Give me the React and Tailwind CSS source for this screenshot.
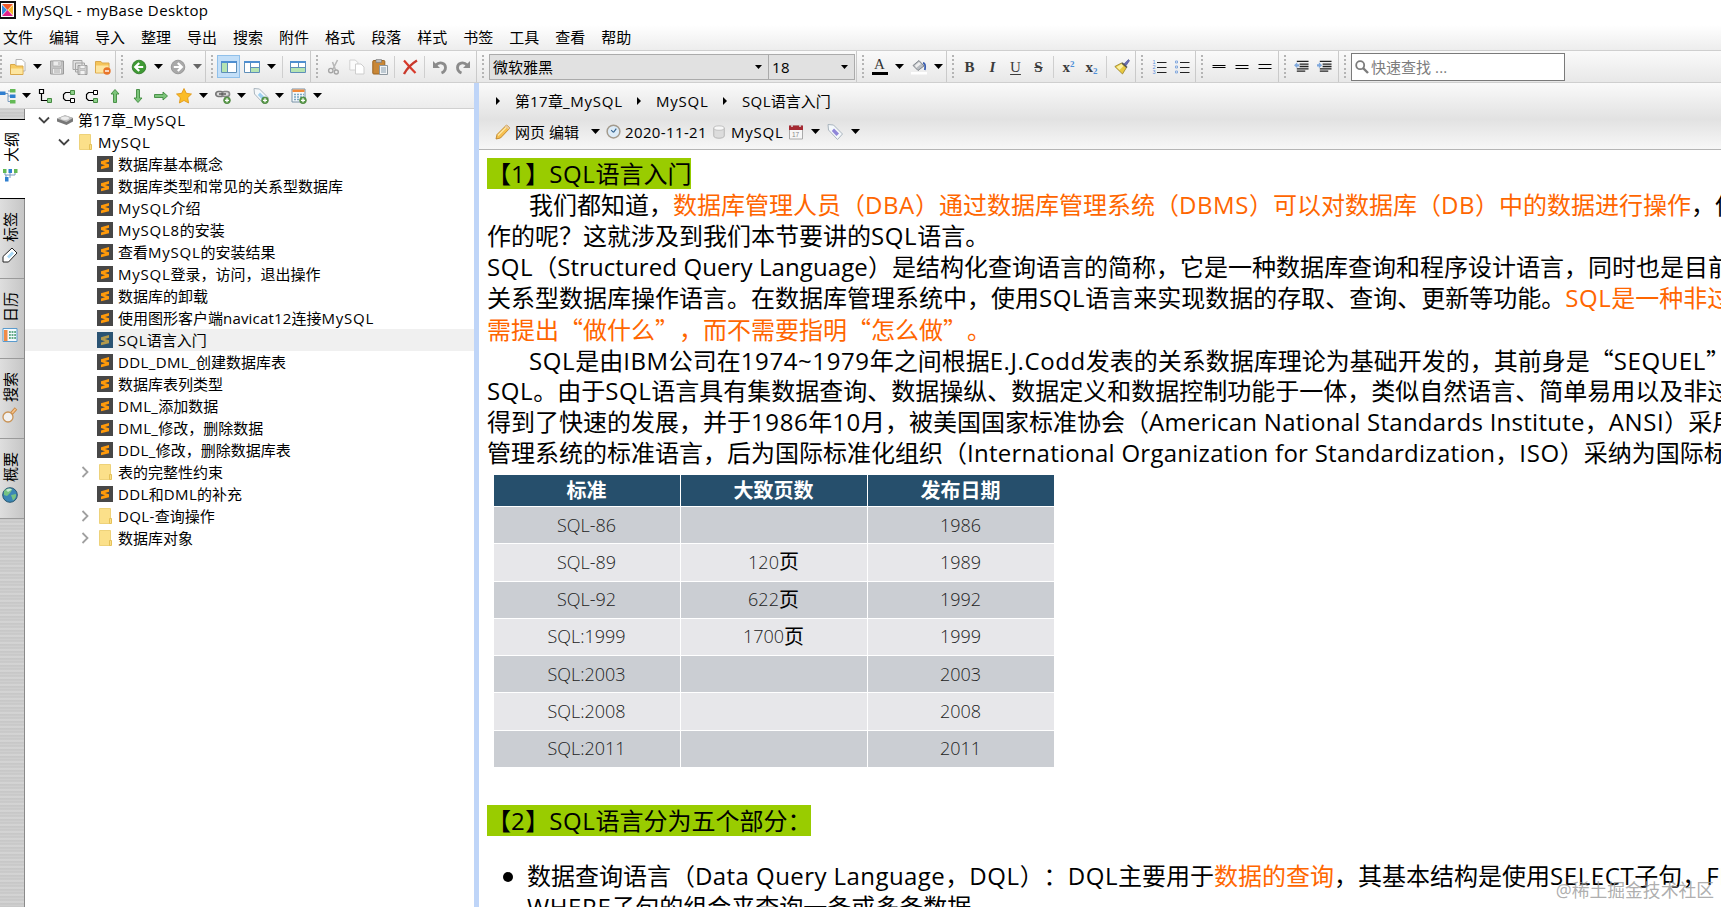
const LATIN = /([\x20-\x7e]+|[“”]+)/;

const tracking = (run) => {
  if (run.includes('MySQL')) return 'tracking-[0.05em]';
  if (run.includes('Structured')) return 'tracking-[0.004em]';
  if (run.includes('Data')) return 'tracking-[0.018em]';
  if (run.includes(' ')) return 'tracking-[0.011em]';
  if (/^[a-z]/.test(run)) return 'tracking-[0.012em]';
  return 'tracking-[0.025em]';
};

// Latin runs are tracked slightly wider, curly quotes take the full-width CJK form
const Text = ({ children, className = '' }) => (
  <span className={`whitespace-pre ${className}`}>
    {children.split(LATIN).map((part, i) => {
      if (/^[“”]/.test(part)) {
        return <span key={i} className="font-['Noto_Sans_CJK_SC',sans-serif]">{part}</span>;
      }
      if (/^[\x20-\x7e]/.test(part)) {
        return <span key={i} className={tracking(part)}>{part}</span>;
      }
      return part;
    })}
  </span>
);

const Svg = ({ children, size = 16 }) => (
  <svg width={size} height={size} viewBox="0 0 16 16" fill="none" className="shrink-0">
    {children}
  </svg>
);

const Cell = ({ children, active }) => (
  <div className={`flex h-[23px] w-[23px] shrink-0 items-center justify-center ${active ? 'border border-[#90c0ea] bg-[#c3dff8]' : ''}`}>
    {children}
  </div>
);

const Arrow = ({ gray, narrow }) => (
  <div className={`flex shrink-0 items-center justify-center ${narrow ? 'w-[15px]' : 'w-4'}`}>
    <svg width="9" height="5" viewBox="0 0 9 5" fill={gray ? '#666' : '#000'}>
      <path d="M0 0h9L4.5 5z" />
    </svg>
  </div>
);

const ComboArrow = () => (
  <svg width="7" height="4" viewBox="0 0 7 4" className="mr-[6px]">
    <path d="M0 0h7L3.5 4z" />
  </svg>
);

const Grip = ({ edge }) => (
  <div className={`flex shrink-0 flex-col items-center gap-[2.4px] ${edge ? 'w-[6px] items-start' : 'w-[11px]'}`}>
    {[0, 1, 2, 3, 4, 5].map((n) => (
      <i key={n} className="h-[2px] w-[2px] bg-[#b4b4b4]" />
    ))}
  </div>
);

const Sep = () => (
  <div className="flex w-[7px] shrink-0 justify-center">
    <i className="h-[22px] w-px bg-[#cfcfcf]" />
  </div>
);

const Group = ({ children, className = '' }) => (
  <div className={`flex h-full shrink-0 items-center border-r border-[#cacaca] ${className}`}>{children}</div>
);

const Plus = () => (
  <>
    <circle cx="12" cy="12.3" r="3.4" fill="#5b9a4b" stroke="#3c7a30" strokeWidth=".6" />
    <path d="M12 10.3v4M10 12.3h4" stroke="#fff" strokeWidth="1.3" />
  </>
);

const OpenIcon = () => (
  <Svg>
    <path d="M6 .5h6l3 3V12H6z" fill="#fff" stroke="#b5b5b5" />
    <path d="M.5 5.5H5l1.2 1.5H13v8.5H.5z" fill="#f7cb62" stroke="#d9a84b" />
    <path d="M1 9.5h11.5v5.5H1z" fill="#fde6a0" />
  </Svg>
);
const SaveIcon = () => (
  <Svg>
    <path d="M1.5 2h13v13h-13z" fill="#c4c4c4" stroke="#9a9a9a" />
    <path d="M4 2h8v5H4z" fill="#ececec" stroke="#aaa" strokeWidth=".7" />
    <path d="M3.5 9.5h9V15h-9z" fill="#eee" stroke="#aaa" strokeWidth=".7" />
    <path d="M5 11h6M5 13h6M10 3v3" stroke="#aaa" />
  </Svg>
);
const SaveAllIcon = () => (
  <Svg>
    <path d="M1 1.5h9v9H1zM3.5 4h9v9h-9z" fill="#e2e2e2" stroke="#a6a6a6" />
    <path d="M6 6.5h9v9H6z" fill="#cfcfcf" stroke="#9a9a9a" />
    <path d="M8 6.5h5v3H8zM8 11.5h5v4H8z" fill="#f3f3f3" stroke="#aaa" strokeWidth=".6" />
  </Svg>
);
const FolderMinusIcon = () => (
  <Svg>
    <path d="M.5 2.5H6L7.2 4H14v10H.5z" fill="#f5c55a" stroke="#dba94e" />
    <path d="M1 6.5h12.5v7H1z" fill="#fde5a0" />
    <circle cx="12" cy="12" r="3.7" fill="#e8752a" />
    <path d="M10 12h4" stroke="#fff" strokeWidth="1.4" />
  </Svg>
);
const RoundArrow = ({ back }) => (
  <Svg>
    <circle cx="8" cy="8" r="6.8" fill={back ? '#3f9a34' : '#a9a9a9'} stroke={back ? '#2b7423' : '#8d8d8d'} strokeWidth=".8" />
    <path d={back ? 'M8.2 4L4.2 8l4 4M4.6 8h7.6' : 'M7.8 4l4 4-4 4M11.4 8H3.8'} stroke="#fff" strokeWidth="2.2" />
  </Svg>
);
const LayoutIcon = ({ kind }) => (
  <Svg>
    <path d="M.5 2.5h15v11H.5z" fill="#fff" stroke="#5f8fb8" />
    <path d="M0 2h16v2H0z" fill="#4f8fd0" />
    {kind === 'left' && <><path d="M1 4h5v9H1z" fill="#b5e4b2" /><path d="M6.5 4v9.5" stroke="#5f8fb8" /></>}
    {kind === 'split' && <><path d="M7 9h8v4H7z" fill="#b5e4b2" /><path d="M6.5 4v9.5M6.5 8.5h9" stroke="#5f8fb8" /></>}
    {kind === 'bottom' && <><path d="M1 9h14v4H1z" fill="#b5e4b2" /><path d="M8.500 4v5M.5 8.5h15" stroke="#5f8fb8" /></>}
  </Svg>
);
const CutIcon = () => (
  <Svg>
    <path d="M11.5 1L7 10M6.5 3l3 8" stroke="#b8b8b8" strokeWidth="1.6" />
    <circle cx="4.8" cy="11.6" r="2.2" stroke="#a5a5a5" strokeWidth="1.4" />
    <circle cx="10.3" cy="13" r="2" stroke="#a5a5a5" strokeWidth="1.4" />
  </Svg>
);
const CopyIcon = () => (
  <Svg>
    <path d="M.8 1h5.5l2.5 2.5V11h-8z" fill="#fbfbfb" stroke="#d2d2d2" />
    <path d="M6.5 5H12l3 3v7H6.5z" fill="#fff" stroke="#cdcdcd" />
  </Svg>
);
const PasteIcon = () => (
  <Svg>
    <rect x=".8" y="1.5" width="12" height="13.5" rx="1" fill="#c98736" stroke="#9a6320" />
    <path d="M4 .5h5.5v3H4z" fill="#bbb" stroke="#777" strokeWidth=".6" />
    <path d="M7.5 6.5h8v9h-8z" fill="#f2f4f6" stroke="#8d979e" />
    <path d="M9 9h5M9 11h5M9 13h5" stroke="#8aa0b0" />
  </Svg>
);
const DeleteIcon = () => (
  <Svg>
    <path d="M2 1.5c3 3.5 7 8 11.5 12.5" stroke="#d83a2b" strokeWidth="2.2" />
    <path d="M15 1.5C10 4.5 5 9.5 2 15" stroke="#c9382b" strokeWidth="2.4" />
  </Svg>
);
const UndoIcon = ({ flip }) => (
  <Svg>
    <g transform={flip ? 'translate(16 0) scale(-1 1)' : undefined}>
      <path d="M4 6C7 2.5 13.5 3.5 13.5 8.5c0 2.5-1.5 4.5-4 5.5" stroke="#8b8b8b" strokeWidth="2.8" />
      <path d="M1 2v7h7z" fill="#8b8b8b" />
    </g>
  </Svg>
);
const BucketIcon = () => (
  <Svg>
    <path d="M2 6.5L8 1.5l5 5.5-6 4.5z" fill="#b9bdc2" stroke="#6d7278" strokeWidth=".8" />
    <path d="M4 6.5l4-3.5 2 2-5 4z" fill="#eee" />
    <path d="M12 4c2.5.5 2.5 3.5 1.8 7" stroke="#3c5fb0" strokeWidth="1.8" />
    <path d="M0 13h16v2.5H0z" fill="#fff" />
  </Svg>
);
const BrushIcon = () => (
  <Svg>
    <path d="M14.5.5l1 1.2-3.5 5-2-1.8z" fill="#6a6fb5" stroke="#484d8a" strokeWidth=".6" />
    <path d="M7.5 4l5 4.5L8.5 15 .8 7.5z" fill="#e9c941" stroke="#8a7420" strokeWidth=".7" />
    <path d="M2.5 8l5-3 2 2-4 4z" fill="#fbf1a4" />
    <path d="M8 3.8L13 8.5" stroke="#555" strokeWidth="1.6" />
  </Svg>
);
const ListIcon = ({ numbered }) => (
  <Svg>
    <path d="M6 3.5h9.5M6 8.5h9.5M6 13.5h9.5" stroke="#222" />
    {numbered ? (
      <g fill="#5b8fdc" fontSize="5.5" fontFamily="Liberation Sans">
        <text x="1.5" y="5">1</text>
        <text x="1.5" y="10">2</text>
        <text x="1.5" y="15">3</text>
      </g>
    ) : (
      <path d="M1.5 2h2v2h-2zM1.5 7h2v2h-2zM1.5 12h2v2h-2z" stroke="#86abdf" />
    )}
  </Svg>
);
const IndentIcon = ({ right }) => (
  <Svg size={15}>
    <path d="M3 2.5h12.5M6 5.5h9.5M6 8h9.5M3 10.5h12.5M3 13h9" stroke="#222" strokeWidth="1.4" />
    <path d={right ? 'M5.5 6.7L2 3.5v2H0v2.4h2v2z' : 'M0 6.7L3.5 3.5v2h2v2.4h-2v2z'} fill="#7fa8dc" />
  </Svg>
);
const AlignIcon = ({ children }) => (
  <Svg>
    <path d={children} stroke="#000" />
  </Svg>
);

const TreeIcon = () => (
  <Svg>
    <path d="M5 5.5h3v8h3M8 8h3M8 3h3" stroke="#7a9cc0" />
    <path d="M0 3.5h5.5V7H0zM10 6.5h5.500V10H10z" fill="#2f7fd0" />
    <path d="M10 1h5.5v3.5H10zM10 12h5.5v3.5H10z" fill="#63b955" />
  </Svg>
);
const NodeIcon = ({ kind }) => (
  <Svg>
    {kind === 'child' && (
      <>
        <path d="M3.5 5v7.5H9" stroke="#000" strokeWidth="1.2" />
        <path d="M1.5 1.5h4v4h-4z" fill="#fff" stroke="#000" strokeWidth="1.2" />
        <path d="M9.5 10.5h4v4h-4z" fill="#8ed08a" stroke="#468a43" />
      </>
    )}
    {kind !== 'child' && (
      <>
        <path d="M9 4.5H4.500l-2 2v4l2 2H9" stroke="#000" strokeWidth="1.2" />
        <path d="M9.5 2.5h4v4h-4z" fill={kind === 'above' ? '#8ed08a' : '#fff'} stroke={kind === 'above' ? '#468a43' : '#000'} />
        <path d="M9.5 10.5h4v4h-4z" fill={kind === 'above' ? '#fff' : '#8ed08a'} stroke={kind === 'above' ? '#000' : '#468a43'} />
      </>
    )}
  </Svg>
);
const GreenArrow = ({ rotate }) => (
  <Svg>
    <path transform={`rotate(${rotate} 8 8)`} d="M8 1.5L12 6H9.5v8.500h-3V6H4z" fill="#7cc47a" stroke="#3e8a3d" strokeWidth=".9" />
  </Svg>
);
const StarIcon = () => (
  <Svg>
    <path d="M8 .5l2.3 4.8 5.2.7-3.8 3.7.9 5.3L8 12.5 3.4 15l.9-5.3L.5 6l5.200-.7z" fill="#fbbd28" stroke="#dd9310" strokeWidth=".8" />
  </Svg>
);
const LinkIcon = () => (
  <Svg>
    <rect x=".8" y="3.5" width="7.5" height="5" rx="2.5" fill="#ddd" stroke="#777" strokeWidth="1.7" />
    <rect x="7" y="3.5" width="7.5" height="5" rx="2.5" fill="#ddd" stroke="#888" strokeWidth="1.7" />
    <path d="M4 6h7" stroke="#555" strokeWidth="1.4" />
    <Plus />
  </Svg>
);
const TagIcon = ({ plus }) => (
  <Svg>
    <path d="M1 .5l5.500.5L15.500 10 10.500 15.500 1.500 6z" fill="#f4f8fb" stroke="#a9b4bd" />
    <path d="M7 4.500l5 5-2.500 2.500L4.800 7z" fill={plus ? '#9fd0ef' : '#8f86d8'} />
    {plus && <Plus />}
  </Svg>
);
const CalcIcon = () => (
  <Svg>
    <path d="M1 1h13v13H1z" fill="#f5f8fa" stroke="#7893a8" />
    <path d="M1.5 1.5h12V4h-12z" fill="#f28a3a" />
    <path d="M3 6.500h10M3 9h10M3 11.500h10" stroke="#7ba7c4" strokeWidth="1.5" strokeDasharray="2 1" />
    <Plus />
  </Svg>
);
const PencilIcon = () => (
  <Svg>
    <path d="M1 15l1-4.5L11.5 1 15 4 5.500 14z" fill="#f6bf4f" stroke="#b57a1e" strokeWidth=".8" />
    <path d="M3 11.5l9-9" stroke="#fde9a8" strokeWidth="1.3" />
    <path d="M11.5 1L15 4l-1.500 1.500L10 2.500z" fill="#e7c9a0" />
  </Svg>
);
const ClockIcon = () => (
  <Svg size={15}>
    <circle cx="8" cy="8" r="6.8" fill="#dcebf7" stroke="#a39a8c" strokeWidth="1.6" />
    <path d="M8 9l3-4M8 9L5.5 6.5" stroke="#35648f" strokeWidth="1.2" />
  </Svg>
);
const CylinderIcon = () => (
  <Svg size={14}>
    <path d="M2 3.5v9c0 3.5 12 3.5 12 0v-9z" fill="#dcdcdc" stroke="#b0b0b0" />
    <ellipse cx="8" cy="3.5" rx="6" ry="2.5" fill="#f7f7f7" stroke="#bbb" />
  </Svg>
);
const CalendarIcon = () => (
  <Svg>
    <path d="M1.5 2h13v13h-13z" fill="#f7f7f7" stroke="#aaa" />
    <path d="M1 1.5h14V6H1z" fill="#a52a33" />
    <path d="M4 0v3M12 0v3" stroke="#ddd" strokeWidth="1.5" />
    <text x="4" y="13" fontSize="6.5" fill="#888" fontFamily="Liberation Sans">17</text>
  </Svg>
);
const DiskIcon = () => (
  <Svg>
    <path d="M0 6.5L8 3.5 16 6v3.500L9.500 13 0 9.500z" fill="#777" />
    <path d="M0 6.5L8 3l8 3-6.500 4z" fill="#bdbdbd" />
    <ellipse cx="8" cy="6.300" rx="4" ry="1.700" fill="#ececec" />
  </Svg>
);
const FolderIcon = () => (
  <Svg>
    <path d="M2.5.5h11v15h-11z" fill="#fbe08a" stroke="#eed27a" />
    <path d="M12.5 10.5h2v5h-2z" fill="#fbe08a" stroke="#e5c158" />
  </Svg>
);
const SublimeIcon = ({ selected }) => (
  <Svg>
    <path d="M0 0h16v16H0z" fill={selected ? '#2a5373' : '#474747'} />
    <path d="M12 3v2.800L8 7l4 1.300v2.900L4 13.300v-2.700l4-1.300-4-1.200V5.200z" fill={selected ? '#b39a4c' : '#ff9a0a'} />
  </Svg>
);
const OutlineTabIcon = () => (
  <Svg>
    <path d="M3 5v2h10V5M8 5v5M4 7v3" stroke="#7a9cc0" />
    <path d="M1 1h3.500v4H1zM12 1h3.500v4H12z" fill="#63b955" />
    <path d="M6.500 1H10v4H6.500zM3 9h3.500v4.500H3z" fill="#2f7fd0" />
  </Svg>
);
const TagTabIcon = () => (
  <Svg>
    <path d="M1 15V9.500L10 1l5 5-8.500 9z" fill="#fff" stroke="#222" />
    <path d="M5 9.500L10 4.500l2 2-5 5z" fill="#a9d8f5" />
  </Svg>
);
const CalendarTabIcon = () => (
  <Svg>
    <path d="M1 1.500h14v13H1z" fill="#f4faff" stroke="#5a9bcc" />
    <path d="M2 3h3.500v11H2z" fill="#f08b46" />
    <path d="M7 5h7M7 8h7M7 11h7" stroke="#63ab86" strokeWidth="1.800" strokeDasharray="1.800 .8" />
  </Svg>
);
const SearchTabIcon = () => (
  <Svg>
    <circle cx="6" cy="10" r="5" fill="#f1f1f1" stroke="#c99458" strokeWidth="1.300" />
    <path d="M9.500 6.500L14 1.500" stroke="#c98a48" strokeWidth="3.400" />
    <path d="M10 6L13.500 2" stroke="#f6c48c" strokeWidth="1.600" />
  </Svg>
);
const GlobeTabIcon = () => (
  <Svg>
    <circle cx="8" cy="8" r="7.300" fill="#3b86b5" stroke="#28566f" />
    <path d="M2 4c3-3 7-3 8-1L8 6 5 9 2 8zM9 8l5-1c.5 3-1 5-3 6.500z" fill="#76c383" />
    <path d="M4 3c2-2 5-1.500 6-.5L6 5z" fill="#c6ead0" />
  </Svg>
);

const MENU = ['文件', '编辑', '导入', '整理', '导出', '搜索', '附件', '格式', '段落', '样式', '书签', '工具', '查看', '帮助'];

const TABS = [
  { label: '大纲', icon: <OutlineTabIcon />, active: true },
  { label: '标签', icon: <TagTabIcon /> },
  { label: '日历', icon: <CalendarTabIcon /> },
  { label: '搜索', icon: <SearchTabIcon /> },
  { label: '概要', icon: <GlobeTabIcon /> },
];

const NODES = [
  { label: '数据库基本概念' },
  { label: '数据库类型和常见的关系型数据库' },
  { label: 'MySQL介绍' },
  { label: 'MySQL8的安装' },
  { label: '查看MySQL的安装结果' },
  { label: 'MySQL登录，访问，退出操作' },
  { label: '数据库的卸载' },
  { label: '使用图形客户端navicat12连接MySQL' },
  { label: 'SQL语言入门', selected: true },
  { label: 'DDL_DML_创建数据库表' },
  { label: '数据库表列类型' },
  { label: 'DML_添加数据' },
  { label: 'DML_修改，删除数据' },
  { label: 'DDL_修改，删除数据库表' },
  { label: '表的完整性约束', folder: true },
  { label: 'DDL和DML的补充' },
  { label: 'DQL-查询操作', folder: true },
  { label: '数据库对象', folder: true },
];

const STANDARDS = [
  ['SQL-86', '', '1986'],
  ['SQL-89', '120', '1989'],
  ['SQL-92', '622', '1992'],
  ['SQL:1999', '1700', '1999'],
  ['SQL:2003', '', '2003'],
  ['SQL:2008', '', '2008'],
  ['SQL:2011', '', '2011'],
];

const Toolbar = () => (
  <div className="flex h-[33px] shrink-0 items-center border-y border-[#cfcfcf] bg-linear-to-b from-[#fafafa] to-[#e8e8e8]">
    <Group className="pr-px">
      <Grip edge />
      <Cell><OpenIcon /></Cell>
      <Arrow />
      <Cell><SaveIcon /></Cell>
      <Cell><SaveAllIcon /></Cell>
      <Cell><FolderMinusIcon /></Cell>
    </Group>
    <Group>
      <Grip />
      <Cell><RoundArrow back /></Cell>
      <Arrow />
      <Cell><RoundArrow /></Cell>
      <Arrow gray />
    </Group>
    <Group className="pr-px">
      <Grip />
      <Cell active><LayoutIcon kind="left" /></Cell>
      <Cell><LayoutIcon kind="split" /></Cell>
      <Arrow />
      <Sep />
      <Cell><LayoutIcon kind="bottom" /></Cell>
    </Group>
    <Group className="pr-[2px]">
      <Grip />
      <Cell><CutIcon /></Cell>
      <Cell><CopyIcon /></Cell>
      <Cell><PasteIcon /></Cell>
      <Sep />
      <Cell><DeleteIcon /></Cell>
      <Sep />
      <Cell><UndoIcon /></Cell>
      <Cell><UndoIcon flip /></Cell>
    </Group>
    <Group className="pr-px">
      <Grip />
      <div className="ml-px flex h-[26px] w-[280px] items-center justify-between border border-[#ababab] bg-[#e1e1e1] pl-[3px]">
        <Text>微软雅黑</Text>
        <ComboArrow />
      </div>
      <div className="-ml-px flex h-[26px] w-[87px] items-center justify-between border border-[#ababab] bg-[#e1e1e1] pl-[3px]">
        <Text>18</Text>
        <ComboArrow />
      </div>
    </Group>
    <Group>
      <Grip />
      <Cell>
        <div className="flex h-[17px] w-4 flex-col items-center justify-end border-b-[3px] border-black pb-px font-['Liberation_Serif',serif] text-[15px] leading-[13px] text-[#333]">A</div>
      </Cell>
      <Arrow />
      <Cell><BucketIcon /></Cell>
      <Arrow />
    </Group>
    <Group className="pr-[2px] font-['Liberation_Serif',serif] text-[15px] text-[#3c3c3c]">
      <Grip />
      <Cell><b>B</b></Cell>
      <Cell><b className="italic">I</b></Cell>
      <Cell><span className="underline underline-offset-2">U</span></Cell>
      <Cell><b className="line-through">S</b></Cell>
      <Sep />
      <Cell><b>x<sup className="text-[9px] text-[#4f90d8]">2</sup></b></Cell>
      <Cell><b>x<sub className="text-[9px] text-[#4f90d8]">2</sub></b></Cell>
      <Sep />
      <Cell><BrushIcon /></Cell>
    </Group>
    <Group className="pr-[2px]">
      <Grip />
      <Cell><ListIcon numbered /></Cell>
      <Cell><ListIcon /></Cell>
    </Group>
    <Group className="pr-[2px]">
      <Grip />
      <Cell><AlignIcon>M1.5 6.5h13M1.5 8.5h13</AlignIcon></Cell>
      <Cell><AlignIcon>M1.5 6.5h13M1.5 9.5h13</AlignIcon></Cell>
      <Cell><AlignIcon>M1.5 5.5h13M1.5 9.5h13</AlignIcon></Cell>
    </Group>
    <Group className="pr-[2px]">
      <Grip />
      <Cell><IndentIcon /></Cell>
      <Cell><IndentIcon right /></Cell>
    </Group>
    <Grip />
    <div className="ml-px flex h-7 w-[214px] items-center border border-[#7a7a7a] bg-white pl-[3px] text-[#7c7c7c]">
      <svg width="14" height="14" viewBox="0 0 14 14" fill="none" className="mr-[2px]">
        <circle cx="5.2" cy="5.2" r="4" stroke="#7c7c7c" strokeWidth="1.8" />
        <path d="M8 8l5 5" stroke="#7c7c7c" strokeWidth="2.4" />
      </svg>
      <Text>快速查找 ...</Text>
    </div>
  </div>
);

const TreeToolbar = () => (
  <div className="flex h-[26px] shrink-0 items-center border-b border-[#d0d0d0] bg-linear-to-b from-[#fafafa] to-[#ececec]">
    <div className="w-[19px] shrink-0"><TreeIcon /></div>
    <Arrow narrow />
    <Cell><NodeIcon kind="child" /></Cell>
    <Cell><NodeIcon kind="above" /></Cell>
    <Cell><NodeIcon kind="below" /></Cell>
    <Cell><GreenArrow rotate={0} /></Cell>
    <Cell><GreenArrow rotate={180} /></Cell>
    <Cell><GreenArrow rotate={90} /></Cell>
    <Cell><StarIcon /></Cell>
    <Arrow />
    <Cell><LinkIcon /></Cell>
    <Arrow narrow />
    <Cell><TagIcon plus /></Cell>
    <Arrow narrow />
    <Cell><CalcIcon /></Cell>
    <Arrow narrow />
  </div>
);

const SideTabs = () => (
  <div className="flex w-[25px] shrink-0 flex-col border-r border-[#8a8a8a] bg-[repeating-linear-gradient(180deg,#c6c6c6_0px,#d8d8d8_2px,#c2c2c2_4px,#d2d2d2_5px,#c6c6c6_7px)] pt-[10px]">
    {TABS.map((tab) => (
      <div
        key={tab.label}
        className={`flex h-20 shrink-0 flex-col items-center justify-center gap-[5px] pb-[2px] ${
          tab.active ? '-mr-px border-y border-black bg-white' : 'border-b border-[#9a9a9a] bg-linear-to-r from-[#dedede] to-[#c6c6c6]'
        }`}
      >
        <span className="-ml-[4px] rotate-180 leading-[20px] [text-orientation:sideways] [writing-mode:vertical-rl]">{tab.label}</span>
        <div className="-ml-[5px]">{tab.icon}</div>
      </div>
    ))}
  </div>
);

const Chevron = ({ open }) => (
  <div className="flex w-5 shrink-0 justify-center">
    <svg width="12" height="12" viewBox="0 0 12 12" fill="none">
      <path d={open ? 'M1 3.5l5 5 5-5' : 'M3.5 1l5 5-5 5'} stroke={open ? '#444' : '#a0a0a0'} strokeWidth="1.8" />
    </svg>
  </div>
);

const TreeRow = ({ node }) => (
  <div className={`flex h-[22px] items-center pl-[50px] ${node.selected ? 'bg-[#f0f0f0]' : ''}`}>
    {node.folder ? <Chevron /> : <div className="w-5" />}
    <div className="ml-[2px] mr-[5px]">{node.folder ? <FolderIcon /> : <SublimeIcon selected={node.selected} />}</div>
    <Text>{node.label}</Text>
  </div>
);

const Tree = () => (
  <div className="flex-1 overflow-hidden bg-white">
    <div className="flex h-[22px] items-center pl-[9px]">
      <Chevron open />
      <div className="ml-[3px] mr-[5px]"><DiskIcon /></div>
      <Text>第17章_MySQL</Text>
    </div>
    <div className="flex h-[22px] items-center pl-[29px]">
      <Chevron open />
      <div className="ml-[3px] mr-[5px]"><FolderIcon /></div>
      <Text>MySQL</Text>
    </div>
    {NODES.map((node) => (
      <TreeRow key={node.label} node={node} />
    ))}
  </div>
);

const Crumb = ({ children, className }) => (
  <div className={`flex items-center ${className}`}>
    <svg width="4" height="8" viewBox="0 0 4 8" className="mr-[15px]">
      <path d="M0 0l4 4-4 4z" />
    </svg>
    <Text>{children}</Text>
  </div>
);

const NoteHeader = () => (
  <div className="h-[67px] shrink-0 border-b border-[#b5b5b5] bg-linear-to-b from-[#fafafa] via-[#e2e2e2] via-55% to-[#f7f7f7]">
    <div className="flex h-[37px] items-center pb-[2px] pl-[17px]">
      <Crumb className="w-[141px]">第17章_MySQL</Crumb>
      <Crumb className="w-[86px]">MySQL</Crumb>
      <Crumb className="w-[120px]">SQL语言入门</Crumb>
    </div>
    <div className="flex h-[23px] items-center pl-4">
      <PencilIcon />
      <Text className="ml-[4px] w-[72px]">网页 编辑</Text>
      <Arrow />
      <div className="ml-[3px] mr-1"><ClockIcon /></div>
      <Text className="w-[87px]">2020-11-21</Text>
      <CylinderIcon />
      <Text className="ml-[5px] w-[57px]">MySQL</Text>
      <CalendarIcon />
      <div className="ml-[3px]"><Arrow /></div>
      <div className="mx-1"><TagIcon /></div>
      <Arrow />
    </div>
  </div>
);

const Line = ({ children, indent }) => (
  <p className={`h-[31px] whitespace-pre ${indent ? 'pl-[42px]' : ''}`}>{children}</p>
);

const StandardsTable = () => (
  <div className="ml-[7px] mt-[7px] w-[560px]">
    <div className="grid h-[30px] grid-cols-3 gap-x-px text-center text-[20px] leading-[31px] font-bold text-white">
      {['标准', '大致页数', '发布日期'].map((head) => (
        <div key={head} className="bg-[#264f6c] pr-px">{head}</div>
      ))}
    </div>
    <div className="mt-[2px] flex h-[260px] flex-col gap-px">
      {STANDARDS.map((row, i) => (
        <div key={row[0]} className="grid flex-1 grid-cols-3 gap-x-px text-[18px] font-light text-[#222]">
          {row.map((cell, j) => (
            <div key={j} className={`flex items-center justify-center pr-px ${i % 2 ? 'bg-[#e7e7ea]' : 'bg-[#cbced3]'}`}>
              {cell}
              {j === 1 && cell && <span className="text-[20px] leading-none font-normal text-black">页</span>}
            </div>
          ))}
        </div>
      ))}
    </div>
  </div>
);

const Note = () => (
  <div className="flex-1 overflow-hidden bg-white pl-[8px] pt-[8px] text-[24px] leading-[31px]">
    <div className="flex">
      <Text className="h-[31px] bg-[#99cc00]">【1】SQL语言入门</Text>
    </div>
    <Line indent>
      <Text>我们都知道，</Text>
      <Text className="text-[#ff6600]">数据库管理人员（DBA）通过数据库管理系统（DBMS）可以对数据库（DB）中的数据进行操作</Text>
      <Text>，但</Text>
    </Line>
    <Line><Text>作的呢？这就涉及到我们本节要讲的SQL语言。</Text></Line>
    <Line><Text>SQL（Structured Query Language）是结构化查询语言的简称，它是一种数据库查询和程序设计语言，同时也是目前</Text></Line>
    <Line>
      <Text>关系型数据库操作语言。在数据库管理系统中，使用SQL语言来实现数据的存取、查询、更新等功能。</Text>
      <Text className="text-[#ff6600]">SQL是一种非过</Text>
    </Line>
    <Line><Text className="text-[#ff6600]">需提出“做什么”，而不需要指明“怎么做”。</Text></Line>
    <Line indent><Text>SQL是由IBM公司在1974~1979年之间根据E.J.Codd发表的关系数据库理论为基础开发的，其前身是“SEQUEL”</Text></Line>
    <Line><Text>SQL。由于SQL语言具有集数据查询、数据操纵、数据定义和数据控制功能于一体，类似自然语言、简单易用以及非过</Text></Line>
    <Line><Text>得到了快速的发展，并于1986年10月，被美国国家标准协会（American National Standards Institute，ANSI）采用</Text></Line>
    <Line><Text>管理系统的标准语言，后为国际标准化组织（International Organization for Standardization，ISO）采纳为国际标</Text></Line>
    <StandardsTable />
    <div className="mt-[38px] flex">
      <Text className="h-[31px] bg-[#99cc00]">【2】SQL语言分为五个部分：</Text>
    </div>
    <div className="mt-[24px] flex">
      <i className="mr-[14px] ml-4 mt-3 h-[10px] w-[10px] shrink-0 rounded-full bg-black" />
      <div>
        <Line>
          <Text>数据查询语言（Data Query Language，DQL）：DQL主要用于</Text>
          <Text className="text-[#ff6600]">数据的查询</Text>
          <Text>，其基本结构是使用SELECT子句，FR</Text>
        </Line>
        <Line><Text>WHERE子句的组合来查询一条或多条数据</Text></Line>
      </div>
    </div>
  </div>
);

const App = () => {
  return (
    <div
      lang="zh-CN"
      className="relative flex h-[907px] w-[1721px] flex-col overflow-hidden bg-white font-['Open_Sans','Noto_Sans_CJK_SC',sans-serif] text-[15px] leading-[22px] text-black [text-spacing-trim:space-all]"
    >
      <header className="flex h-[25px] shrink-0 items-center gap-[6px] pb-[5px]">
        <svg width="16" height="18" viewBox="0 0 16 18">
          <path d="M0 0h16v18H0z" fill="#111" />
          <path d="M1 2h13v14H1z" fill="#fff" />
          <path d="M2 3h11L7.5 9z" fill="#f05a28" />
          <path d="M2 15h11L7.5 9z" fill="#e0218a" />
          <path d="M2 4v10l5-5z" fill="#3a8de0" />
          <path d="M13 4v10L8 9z" fill="#f5b82e" />
        </svg>
        <span className="tracking-[0.025em]">MySQL - myBase Desktop</span>
      </header>
      <nav className="flex h-[25px] shrink-0 items-center gap-4 bg-linear-to-b from-white to-[#ededed] pb-[2px] pl-[3px]">
        {MENU.map((item) => (
          <span key={item}>{item}</span>
        ))}
      </nav>
      <Toolbar />
      <div className="flex min-h-0 flex-1">
        <aside className="flex w-[474px] shrink-0 flex-col">
          <TreeToolbar />
          <div className="flex min-h-0 flex-1">
            <SideTabs />
            <Tree />
          </div>
        </aside>
        <div className="w-[5px] shrink-0 bg-[#bfd5f8]" />
        <main className="flex min-w-0 flex-1 flex-col">
          <NoteHeader />
          <Note />
        </main>
      </div>
      <div className="absolute right-[7px] bottom-[5px] text-[17.8px] leading-[24px] text-[#999]/80">@稀土掘金技术社区</div>
    </div>
  );
};

export default App;
